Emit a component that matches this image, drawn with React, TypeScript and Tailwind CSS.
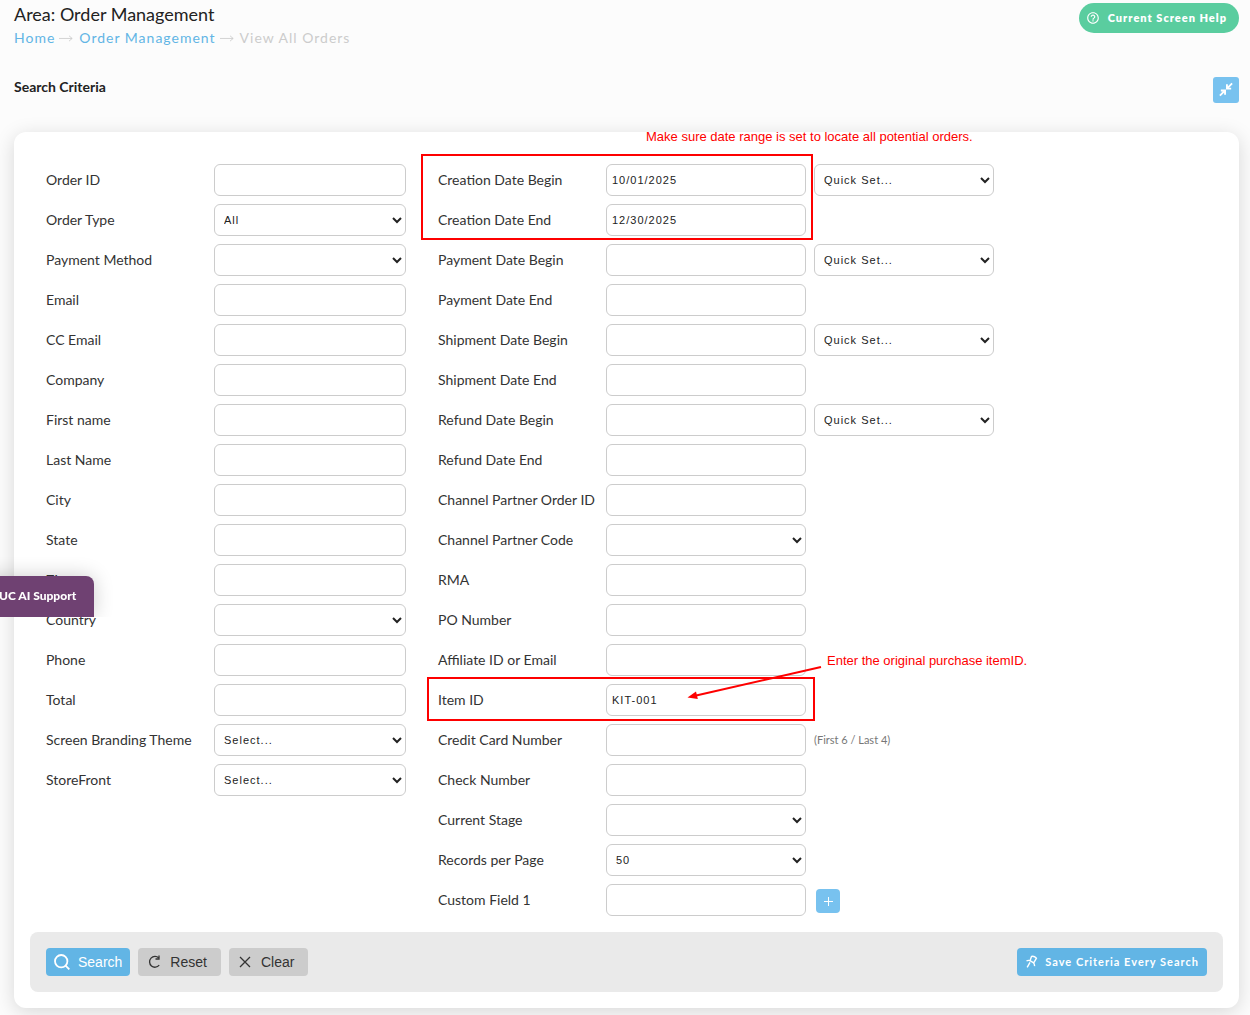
import { useState } from "react";
import { MdHelpOutline } from "react-icons/md";

type Field = {
  id: string;
  label: string;
  value?: string;
  options?: string[];
  quickSet?: boolean;
  hint?: string;
  addable?: boolean;
};

const orderFields: Field[] = [
  { id: "orderId", label: "Order ID" },
  { id: "orderType", label: "Order Type", options: ["All"] },
  { id: "paymentMethod", label: "Payment Method", options: [""] },
  { id: "email", label: "Email" },
  { id: "ccEmail", label: "CC Email" },
  { id: "company", label: "Company" },
  { id: "firstName", label: "First name" },
  { id: "lastName", label: "Last Name" },
  { id: "city", label: "City" },
  { id: "state", label: "State" },
  { id: "zip", label: "Zip" },
  { id: "country", label: "Country", options: [""] },
  { id: "phone", label: "Phone" },
  { id: "total", label: "Total" },
  { id: "theme", label: "Screen Branding Theme", options: ["Select..."] },
  { id: "storeFront", label: "StoreFront", options: ["Select..."] },
];

const detailFields: Field[] = [
  { id: "creationBegin", label: "Creation Date Begin", value: "10/01/2025", quickSet: true },
  { id: "creationEnd", label: "Creation Date End", value: "12/30/2025" },
  { id: "paymentBegin", label: "Payment Date Begin", quickSet: true },
  { id: "paymentEnd", label: "Payment Date End" },
  { id: "shipmentBegin", label: "Shipment Date Begin", quickSet: true },
  { id: "shipmentEnd", label: "Shipment Date End" },
  { id: "refundBegin", label: "Refund Date Begin", quickSet: true },
  { id: "refundEnd", label: "Refund Date End" },
  { id: "channelOrderId", label: "Channel Partner Order ID" },
  { id: "channelCode", label: "Channel Partner Code", options: [""] },
  { id: "rma", label: "RMA" },
  { id: "poNumber", label: "PO Number" },
  { id: "affiliate", label: "Affiliate ID or Email" },
  { id: "itemId", label: "Item ID", value: "KIT-001" },
  { id: "cardNumber", label: "Credit Card Number", hint: "(First 6 / Last 4)" },
  { id: "checkNumber", label: "Check Number" },
  { id: "stage", label: "Current Stage", options: [""] },
  { id: "perPage", label: "Records per Page", options: ["50"] },
  { id: "custom1", label: "Custom Field 1", addable: true },
];

const controlClass =
  "h-8 rounded-md border border-[#ccc] bg-white px-[5px] font-['Liberation_Sans',sans-serif] text-[11px] tracking-[1px] text-[#222]";

function FieldRow({ field, wide }: { field: Field; wide?: boolean }) {
  const [value, setValue] = useState(field.value ?? "");
  const width = wide ? "w-50" : "w-48";

  return (
    <div className="flex h-8 items-center">
      <label htmlFor={field.id} className="w-42 shrink-0 whitespace-nowrap">
        {field.label}
      </label>
      {field.options ? (
        <select id={field.id} className={`${controlClass} ${width}`}>
          {field.options.map((option) => (
            <option key={option}>{option}</option>
          ))}
        </select>
      ) : (
        <input
          id={field.id}
          type="text"
          value={value}
          onChange={(e) => setValue(e.target.value)}
          className={`${controlClass} ${width}`}
        />
      )}
      {field.quickSet && (
        <select aria-label={`${field.label} quick set`} className={`${controlClass} ml-2 w-45`}>
          <option>Quick Set...</option>
        </select>
      )}
      {field.hint && <span className="ml-2 text-[11px] text-[#777]">{field.hint}</span>}
      {field.addable && (
        <button
          aria-label="Add custom field"
          type="button"
          className="mt-0.5 ml-2.5 flex size-6 items-center justify-center rounded bg-[#78c2ef] text-white"
        >
          <svg viewBox="0 0 10 10" className="size-2.5" stroke="currentColor" strokeWidth="1">
            <path d="M5.500 1v9M1 5.500h9" />
          </svg>
        </button>
      )}
    </div>
  );
}

function Annotations() {
  return (
    <div className="pointer-events-none absolute top-0 left-0 font-['Liberation_Sans',sans-serif] text-[13px] leading-4 whitespace-nowrap text-[#fe0000]">
      <div className="absolute -top-2.5 left-[-17px] h-[86px] w-[392px] border-2 border-[#fe0000]" />
      <p className="absolute -top-[35px] left-52">Make sure date range is set to locate all potential orders.</p>
      <div className="absolute top-[513px] left-[-11px] h-11 w-[388px] border-2 border-[#fe0000]" />
      <svg className="absolute top-[500px] left-[248px]" width="136" height="36" viewBox="0 0 136 36" fill="#fe0000">
        <path d="M135 3L8 32" stroke="#fe0000" strokeWidth="2" />
        <path d="M1.500 33.500L10 27.500L11.800 35z" />
      </svg>
      <p className="absolute top-[489px] left-[389px]">Enter the original purchase itemID.</p>
    </div>
  );
}

function BreadcrumbArrow() {
  return (
    <svg viewBox="0 0 16 22" className="mr-1.5 ml-1 h-[22px] w-3.5" fill="none" stroke="currentColor" strokeWidth="1">
      <path d="M0 11.500h15M11.500 8.500L15 11.500L11.500 14.500" />
    </svg>
  );
}

export default function App() {
  const [collapsed, setCollapsed] = useState(false);

  return (
    <div className="relative min-h-screen overflow-x-hidden bg-[#fcfcfc] pr-[11px] pb-[7px] pl-3.5 font-[Lato,sans-serif] text-sm text-[#333]">
      <header className="flex items-start justify-between pt-[3px]">
        <div>
          <h1 className="text-lg leading-[22px] text-[#222]">Area: Order Management</h1>
          <nav aria-label="Breadcrumb" className="mt-0.5 flex text-sm leading-[22px] tracking-[1px] text-[#ccc]">
            <a href="#home" className="text-[#62b5e5]">Home</a>
            <BreadcrumbArrow />
            <a href="#orders" className="text-[#62b5e5]">Order Management</a>
            <BreadcrumbArrow />
            <span>View All Orders</span>
          </nav>
        </div>
        <button type="button" className="flex h-[30px] items-center rounded-full bg-[#5acd9f] pr-3 pl-[7px] text-[11px] font-extrabold tracking-[1px] text-white">
          <MdHelpOutline className="mr-2 size-3.5" />
          Current Screen Help
        </button>
      </header>

      <div className="mt-7 mb-[29px] flex items-center justify-between">
        <h2 className="pb-1.5 text-sm font-bold text-[#222]">Search Criteria</h2>
        <button
          type="button"
          aria-label="Collapse search criteria"
          onClick={() => setCollapsed(!collapsed)}
          className="flex size-[26px] items-center justify-center rounded-[3px] bg-[#78c2ef] text-white"
        >
          <svg viewBox="0 0 16 16" className="size-4 pb-px" fill="none" stroke="currentColor" strokeWidth="2">
            <path d="M1.500 14.500L6.500 9.500M2.500 9H7V13.500M14.500 1.500L9.500 6.500M9 2.500V7H13.500" />
          </svg>
        </button>
      </div>

      {!collapsed && (
        <form
          onSubmit={(e) => e.preventDefault()}
          className="rounded-xl bg-white p-4 shadow-[0_4px_20px_rgba(0,0,0,0.15)]"
        >
          <div className="flex gap-8 p-4">
            <div className="flex flex-col gap-2">
              {orderFields.map((field) => (
                <FieldRow key={field.id} field={field} />
              ))}
            </div>
            <div className="relative flex flex-col gap-2">
              {detailFields.map((field) => (
                <FieldRow key={field.id} field={field} wide />
              ))}
              <Annotations />
            </div>
          </div>

          <div className="flex items-center gap-2 rounded-lg bg-[#eaeaea] p-4 font-['Liberation_Sans',sans-serif]">
            <button type="submit" className="flex h-7 items-center rounded bg-[#62b5e5] px-2 text-sm text-white">
              <svg viewBox="0 0 16 16" className="mr-2 size-4" fill="none" stroke="currentColor" strokeWidth="1.8">
                <circle cx="7.200" cy="7.200" r="6.200" />
                <path d="M11.600 11.600L15.300 15.300" />
              </svg>
              Search
            </button>
            <button type="reset" className="flex h-7 items-center rounded bg-[#ccc] pr-3.5 pl-2.5 text-sm text-[#333]">
              <svg viewBox="0 0 14 14" className="mr-2 size-3.5" fill="none" stroke="currentColor" strokeWidth="1.3">
                <path d="M10.800 3A5.400 5.400 0 1 0 11.200 10.200" />
                <path d="M11 .5V4H7.500" />
              </svg>
              Reset
            </button>
            <button type="button" className="flex h-7 items-center rounded bg-[#ccc] pr-3.5 pl-2.5 text-sm text-[#333]">
              <svg viewBox="0 0 12 12" className="mr-2.5 size-3" fill="none" stroke="currentColor" strokeWidth="1.3">
                <path d="M1 1l10 10M11 1L1 11" />
              </svg>
              Clear
            </button>
            <button
              type="button"
              className="ml-auto flex h-7 items-center rounded bg-[#62b5e5] px-2 font-[Lato,sans-serif] text-[11px] font-bold tracking-[1px] text-white"
            >
              <svg
                viewBox="0 0 14 14"
                className="mr-1.5 size-3.5"
                fill="none"
                stroke="currentColor"
                strokeWidth="1.4"
                strokeLinejoin="round"
              >
                <path d="M6.500 1.500Q9 .7 11.500 3.200L8.700 7.800L5 5.700ZM1.500 6Q3.500 4.800 5.500 6L8 7.500Q9.800 8.800 9.500 11.200M5 7.300L2.200 12.300" />
              </svg>
              Save Criteria Every Search
            </button>
          </div>
        </form>
      )}

      {/* Docked to the window edge, only the tail end of the label shows */}
      <button
        type="button"
        className="fixed top-[576px] left-[-17px] h-[41px] rounded-tr-lg bg-[#6f4172] pr-[18px] pb-0.5 pl-4 text-xs font-black whitespace-nowrap text-white shadow-[0_0_20px_rgba(0,0,0,0.2)] [clip-path:inset(-30px_-30px_0_0)]"
      >
        UC AI Support
      </button>
    </div>
  );
}
